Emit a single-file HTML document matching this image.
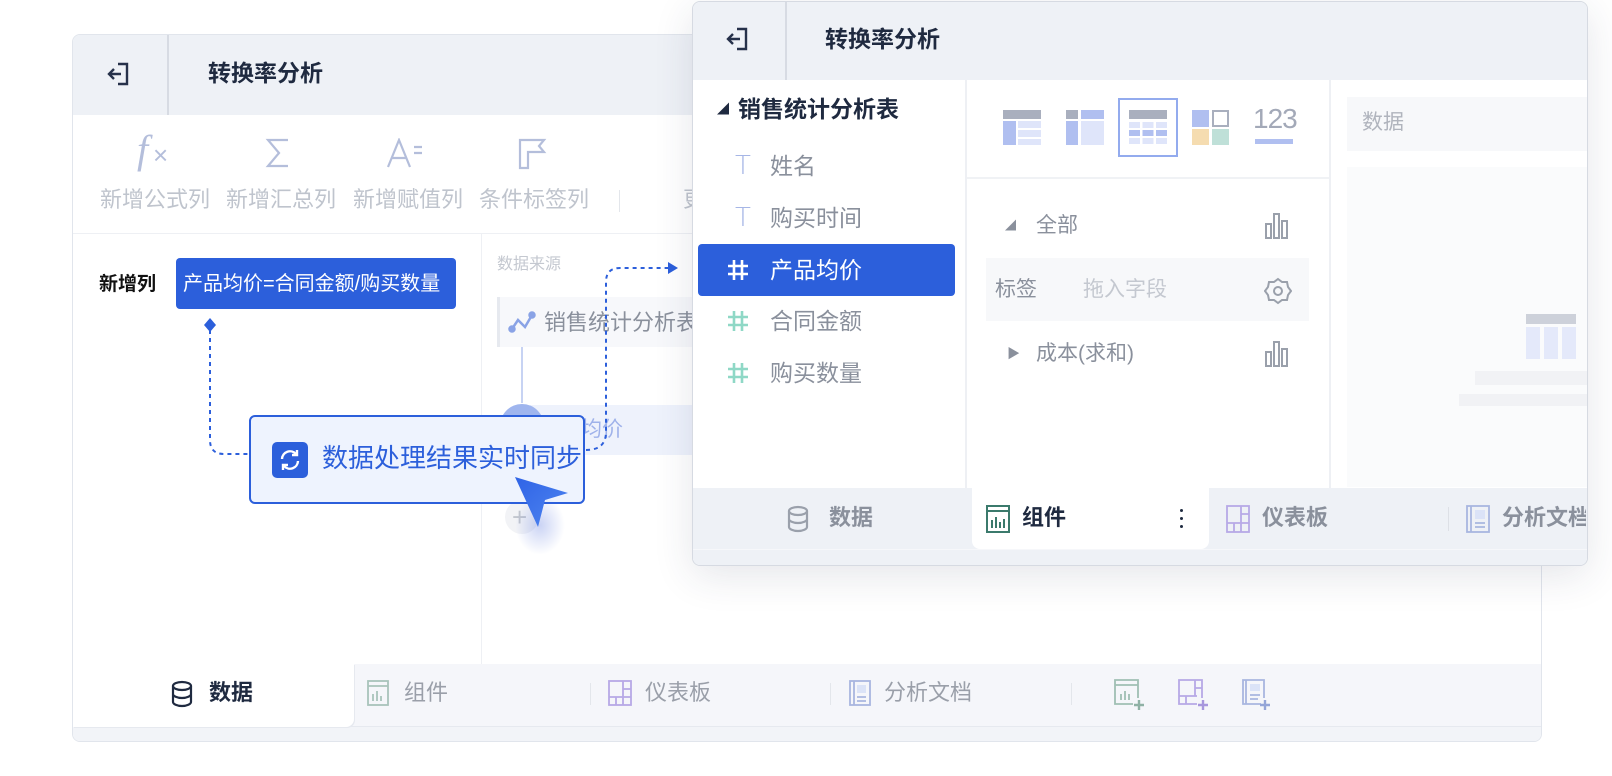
<!DOCTYPE html>
<html><head><meta charset="utf-8"><style>
*{margin:0;padding:0;box-sizing:border-box}
body{width:1612px;height:776px;background:#fff;position:relative;overflow:hidden;font-family:"Liberation Sans","Noto Sans CJK SC",sans-serif;color:#1f2a40}
.a{position:absolute}
.t{position:absolute;white-space:nowrap}
</style></head><body>

<!-- BACK PANEL -->
<div class="a" style="left:72px;top:34px;width:1470px;height:708px;border:1px solid #e1e5ec;border-radius:8px;background:#fff;overflow:hidden">
  <div class="a" style="left:0;top:0;width:1470px;height:80px;background:#eef1f6"></div>
  <div class="a" style="left:94px;top:0;width:2px;height:80px;background:#d7dbe3"></div>
  <div class="a" style="left:0;top:198px;width:1470px;height:1px;background:#eef0f4"></div>
  <div class="a" style="left:408px;top:198px;width:1px;height:431px;background:#eef0f4"></div>
  <div class="a" style="left:0;top:629px;width:1470px;height:79px;background:#f5f6fa"></div>
  <div class="a" style="left:0;top:691px;width:1470px;height:17px;background:#f2f4f8;border-top:1px solid #e6e9ef"></div>
  <div class="a" style="left:0;top:629px;width:281px;height:63px;background:#fff;border-radius:0 0 8px 0;box-shadow:1px 1px 0 #e6e9ef"></div>
</div>
<svg class="a" style="left:106px;top:60px" width="28" height="28" viewBox="0 0 28 28" fill="none" stroke="#26314a" stroke-width="2.4"><path d="M12 4h9v20h-9"/><path d="M3 14h12M8 9l-5 5 5 5"/></svg>
<div class="t" style="left:208px;top:58px;font-size:23px;font-weight:bold;line-height:30px;color:#1f2a40">转换率分析</div>

<!-- toolbar -->
<div class="t" style="left:137px;top:128px;font-family:'Liberation Serif',serif;font-style:italic;font-size:40px;line-height:44px;color:#b4bedb">f</div>
<div class="t" style="left:153px;top:140px;font-size:26px;line-height:30px;color:#b4bedb">×</div>
<svg class="a" style="left:262px;top:138px" width="34" height="30" viewBox="0 0 34 30" fill="none" stroke="#b4bedb" stroke-width="2.2"><path d="M26 2H6l11 13L6 28h20"/></svg>
<svg class="a" style="left:386px;top:138px" width="40" height="30" viewBox="0 0 40 30" fill="none" stroke="#b4bedb" stroke-width="2.2"><path d="M2 29L13 2l11 27M6 20h14"/><path d="M28 9h8M28 15h8"/></svg>
<svg class="a" style="left:517px;top:138px" width="32" height="32" viewBox="0 0 32 32" fill="none" stroke="#b4bedb" stroke-width="2.2"><path d="M3 30V2h24l-5 6 5 6H11v16H3z"/></svg>
<div class="t" style="left:100px;top:185px;font-size:22px;line-height:30px;color:#bfc4cd">新增公式列</div>
<div class="t" style="left:226px;top:185px;font-size:22px;line-height:30px;color:#bfc4cd">新增汇总列</div>
<div class="t" style="left:353px;top:185px;font-size:22px;line-height:30px;color:#bfc4cd">新增赋值列</div>
<div class="t" style="left:479px;top:185px;font-size:22px;line-height:30px;color:#bfc4cd">条件标签列</div>
<div class="a" style="left:619px;top:190px;width:1px;height:22px;background:#e3e6eb"></div>
<div class="t" style="left:683px;top:185px;font-size:22px;line-height:30px;color:#bfc4cd">更</div>

<!-- left pane -->
<div class="t" style="left:99px;top:272px;font-size:19px;font-weight:bold;line-height:26px;color:#111">新增列</div>
<div class="a" style="left:176px;top:258px;width:280px;height:51px;background:#2c5fdb;border-radius:4px"></div>
<div class="t" style="left:183px;top:270px;font-size:20px;line-height:28px;color:#fff">产品均价=合同金额/购买数量</div>

<!-- data source -->
<div class="t" style="left:497px;top:254px;font-size:16px;line-height:22px;color:#c4c8d0">数据来源</div>
<div class="a" style="left:497px;top:297px;width:200px;height:50px;background:#f7f8fb;border-left:3px solid #e6e9ef"></div>
<svg class="a" style="left:508px;top:310px" width="28" height="24" viewBox="0 0 28 24" fill="none" stroke="#8aa3e6" stroke-width="2.5"><path d="M4 19l6-9 7 7 7-12"/><circle cx="4" cy="19" r="2.5" fill="#8aa3e6"/><circle cx="24" cy="5" r="2.5" fill="#8aa3e6"/></svg>
<div class="t" style="left:544px;top:308px;font-size:22px;line-height:30px;color:#8a909c">销售统计分析表</div>
<div class="a" style="left:521px;top:347px;width:2px;height:56px;background:#c7d3f3"></div>
<div class="a" style="left:530px;top:405px;width:170px;height:50px;background:#eef2fc"></div>
<div class="a" style="left:500px;top:404px;width:44px;height:44px;border-radius:50%;background:#9fb5ee"></div>
<div class="t" style="left:560px;top:416px;font-size:21px;line-height:28px;color:#9fb2ea">品均价</div>
<div class="a" style="left:505px;top:500px;width:34px;height:34px;border-radius:50%;background:#f2f3f6"></div>
<div class="t" style="left:512px;top:502px;font-size:26px;line-height:30px;color:#c2c6ce">+</div>

<!-- dotted connectors -->
<svg class="a" style="left:0;top:0" width="700" height="560" fill="none">
  <path d="M210 318l6 7-6 7-6-7z" fill="#2c5fdb"/>
  <path d="M210 330V440q0 14 14 14h26" stroke="#2c5fdb" stroke-width="2" stroke-dasharray="4 4"/>
  <path d="M586 450q20 0 20-18V282q0-14 14-14h48" stroke="#2c5fdb" stroke-width="2" stroke-dasharray="4 4"/>
  <path d="M668 262l10 6-10 6z" fill="#2c5fdb"/>
</svg>

<!-- tooltip -->
<div class="a" style="left:249px;top:415px;width:336px;height:89px;background:#eef3fe;border:2px solid #2c5fdb;border-radius:6px"></div>
<div class="a" style="left:272px;top:442px;width:36px;height:36px;background:#2c5fdb;border-radius:5px"></div>
<svg class="a" style="left:272px;top:442px" width="36" height="36" viewBox="0 0 36 36" fill="none" stroke="#fff" stroke-width="2.4"><path d="M10 17a8 8 0 0 1 14-5"/><path d="M25 8v5h-5"/><path d="M26 19a8 8 0 0 1-14 5"/><path d="M11 28v-5h5"/></svg>
<div class="t" style="left:322px;top:442px;font-size:26px;line-height:32px;color:#2c5fdb">数据处理结果实时同步</div>

<!-- cursor -->
<div class="a" style="left:515px;top:495px;width:50px;height:60px;border-radius:50%;background:radial-gradient(ellipse,rgba(80,110,220,.3),rgba(80,110,220,0) 70%)"></div>
<svg class="a" style="left:505px;top:470px" width="80" height="70"><defs><linearGradient id="g" x1="0" y1="0" x2="1" y2="1"><stop offset="0" stop-color="#2f63e6"/><stop offset="1" stop-color="#4f86f0"/></linearGradient></defs><path d="M10 7L63 23 40 30 33 57z" fill="url(#g)"/></svg>

<!-- back tab bar -->
<svg class="a" style="left:170px;top:680px" width="24" height="28" viewBox="0 0 24 28" fill="none" stroke="#1f2a40" stroke-width="2.2"><ellipse cx="12" cy="6" rx="9" ry="4"/><path d="M3 6v16c0 2 4 4 9 4s9-2 9-4V6M3 14c0 2 4 4 9 4s9-2 9-4"/></svg>
<div class="t" style="left:209px;top:678px;font-size:22px;font-weight:bold;line-height:30px;color:#1f2a40">数据</div>
<svg class="a" style="left:367px;top:680px" width="22" height="26" viewBox="0 0 22 26" fill="none" stroke="#a9c4bb" stroke-width="1.8"><rect x="1" y="1" width="20" height="24"/><path d="M1 6h20M6 21v-7M10 21v-10M14 21v-5"/></svg>
<div class="t" style="left:404px;top:678px;font-size:22px;line-height:30px;color:#9a9fa9">组件</div>
<div class="a" style="left:590px;top:683px;width:1px;height:22px;background:#e3e6eb"></div>
<svg class="a" style="left:608px;top:680px" width="24" height="26" viewBox="0 0 24 26" fill="none" stroke="#b7a9e6" stroke-width="1.8"><rect x="1" y="1" width="22" height="24"/><path d="M15 1v16M15 9h8M1 17h22M8 17v8M15 17v8"/></svg>
<div class="t" style="left:645px;top:678px;font-size:22px;line-height:30px;color:#9a9fa9">仪表板</div>
<div class="a" style="left:830px;top:683px;width:1px;height:22px;background:#e3e6eb"></div>
<svg class="a" style="left:849px;top:680px" width="22" height="26" viewBox="0 0 22 26" fill="none" stroke="#a8b6e0" stroke-width="1.8"><rect x="1" y="1" width="20" height="24"/><path d="M5 1v24"/><rect x="8" y="5" width="9" height="8" fill="#dbe3f7" stroke="none"/><path d="M8 17h9M8 21h9"/></svg>
<div class="t" style="left:884px;top:678px;font-size:22px;line-height:30px;color:#9a9fa9">分析文档</div>
<div class="a" style="left:1071px;top:683px;width:1px;height:22px;background:#e3e6eb"></div>
<svg class="a" style="left:1114px;top:679px" width="32" height="32" viewBox="0 0 32 32" fill="none" stroke="#9fbfb3" stroke-width="1.8"><path d="M24 19V1H1v24h18"/><path d="M1 6h23M7 21v-6M11 21v-9M15 21v-6"/><path d="M25 21v10M20 26h10" stroke="#8fb1a5" stroke-width="2.4"/></svg>
<svg class="a" style="left:1178px;top:679px" width="32" height="32" viewBox="0 0 32 32" fill="none" stroke="#b7a9e6" stroke-width="1.8"><path d="M24 19V1H1v24h18"/><path d="M17 1v16M17 9h7M1 17h18M8 17v8"/><path d="M25 21v10M20 26h10" stroke="#a797dd" stroke-width="2.4"/></svg>
<svg class="a" style="left:1242px;top:679px" width="32" height="32" viewBox="0 0 32 32" fill="none" stroke="#a8b6e0" stroke-width="1.8"><path d="M22 19V1H1v24h18M4 1v24"/><rect x="8" y="5" width="10" height="7" fill="#dbe3f7" stroke="none"/><path d="M8 16h10M8 20h8"/><path d="M23 21v10M18 26h10" stroke="#94a5d8" stroke-width="2.4"/></svg>

<!-- FRONT PANEL -->
<div class="a" style="left:692px;top:1px;width:896px;height:565px;border:1px solid #d6dae2;border-radius:8px;background:#fff;overflow:hidden;box-shadow:0 10px 40px rgba(40,50,80,.12)">
  <div class="a" style="left:0;top:0;width:896px;height:78px;background:#eef1f6"></div>
  <div class="a" style="left:92px;top:0;width:2px;height:78px;background:#d7dbe3"></div>
  <div class="a" style="left:272px;top:78px;width:2px;height:408px;background:#eef0f4"></div>
  <div class="a" style="left:636px;top:78px;width:2px;height:408px;background:#eef0f4"></div>
  <div class="a" style="left:274px;top:175px;width:362px;height:2px;background:#f0f2f5"></div>
  <div class="a" style="left:0;top:486px;width:896px;height:79px;background:#eef1f6"></div>
  <div class="a" style="left:0;top:547px;width:896px;height:1px;background:#f6f7fa"></div>
  <div class="a" style="left:279px;top:486px;width:237px;height:61px;background:#fff;border-radius:0 0 8px 8px"></div>
  <!-- right col -->
  <div class="a" style="left:654px;top:95px;width:242px;height:54px;background:#f7f8fa"></div>
  <div class="t" style="left:669px;top:107px;font-size:21px;line-height:28px;color:#b0b4bd">数据</div>
  <div class="a" style="left:654px;top:165px;width:242px;height:320px;background:#fafbfc"></div>
  <div class="a" style="left:833px;top:312px;width:50px;height:10px;background:#cdd1da"></div>
  <div class="a" style="left:833px;top:325px;width:50px;height:32px;background:repeating-linear-gradient(90deg,#e4e9fa 0 14px,transparent 14px 18px)"></div>
  <div class="a" style="left:782px;top:369px;width:114px;height:14px;background:#f1f2f5"></div>
  <div class="a" style="left:766px;top:392px;width:130px;height:12px;background:#f1f2f5"></div>
</div>
<svg class="a" style="left:725px;top:25px" width="28" height="28" viewBox="0 0 28 28" fill="none" stroke="#26314a" stroke-width="2.4"><path d="M12 4h9v20h-9"/><path d="M3 14h12M8 9l-5 5 5 5"/></svg>
<div class="t" style="left:825px;top:24px;font-size:23px;font-weight:bold;line-height:30px;color:#1f2a40">转换率分析</div>

<!-- front left col -->
<div class="t" style="left:717px;top:95px;font-size:12px;line-height:28px;color:#1f2a40">◢</div>
<div class="t" style="left:738px;top:94px;font-size:23px;font-weight:bold;line-height:30px;color:#1f2a40">销售统计分析表</div>
<div class="t" style="left:735px;top:150px;font-family:'DejaVu Sans',sans-serif;font-size:26px;font-weight:200;line-height:32px;color:#a6b6e6">T</div>
<div class="t" style="left:770px;top:151px;font-size:23px;line-height:30px;color:#8a909c">姓名</div>
<div class="t" style="left:735px;top:202px;font-family:'DejaVu Sans',sans-serif;font-size:26px;font-weight:200;line-height:32px;color:#a6b6e6">T</div>
<div class="t" style="left:770px;top:203px;font-size:23px;line-height:30px;color:#8a909c">购买时间</div>
<div class="a" style="left:698px;top:244px;width:257px;height:52px;background:#2c5fdb;border-radius:4px"></div>
<svg class="a" style="left:726px;top:258px" width="24" height="24" viewBox="0 0 24 24" stroke="#fff" stroke-width="2.6"><path d="M8 2v20M16 2v20M2 8h20M2 16h20"/></svg>
<div class="t" style="left:770px;top:255px;font-size:23px;line-height:30px;color:#fff">产品均价</div>
<svg class="a" style="left:726px;top:309px" width="24" height="24" viewBox="0 0 24 24" stroke="#8fd8c6" stroke-width="2.6"><path d="M8 2v20M16 2v20M2 8h20M2 16h20"/></svg>
<div class="t" style="left:770px;top:306px;font-size:23px;line-height:30px;color:#8a909c">合同金额</div>
<svg class="a" style="left:726px;top:361px" width="24" height="24" viewBox="0 0 24 24" stroke="#8fd8c6" stroke-width="2.6"><path d="M8 2v20M16 2v20M2 8h20M2 16h20"/></svg>
<div class="t" style="left:770px;top:358px;font-size:23px;line-height:30px;color:#8a909c">购买数量</div>

<!-- chart type icons -->
<div class="a" style="left:1003px;top:110px;width:38px;height:9px;background:#a9afbe"></div>
<div class="a" style="left:1003px;top:121px;width:13px;height:24px;background:#b0bff0"></div>
<div class="a" style="left:1018px;top:121px;width:23px;height:7px;background:#dfe5fa"></div>
<div class="a" style="left:1018px;top:130px;width:23px;height:7px;background:#dfe5fa"></div>
<div class="a" style="left:1018px;top:139px;width:23px;height:6px;background:#dfe5fa"></div>
<div class="a" style="left:1066px;top:110px;width:12px;height:9px;background:#a9afbe"></div>
<div class="a" style="left:1081px;top:110px;width:23px;height:9px;background:#b0bff0"></div>
<div class="a" style="left:1066px;top:121px;width:12px;height:24px;background:#b0bff0"></div>
<div class="a" style="left:1081px;top:121px;width:23px;height:24px;background:#dfe5fa"></div>
<div class="a" style="left:1118px;top:98px;width:60px;height:59px;border:2px solid #93abee"></div>
<div class="a" style="left:1129px;top:110px;width:38px;height:9px;background:#a9afbe"></div>
<div class="a" style="left:1129px;top:122px;width:38px;height:6px;background:repeating-linear-gradient(90deg,#dfe5fa 0 11px,transparent 11px 13.5px)"></div>
<div class="a" style="left:1129px;top:130px;width:38px;height:6px;background:repeating-linear-gradient(90deg,#b0bff0 0 11px,transparent 11px 13.5px)"></div>
<div class="a" style="left:1129px;top:138px;width:38px;height:6px;background:repeating-linear-gradient(90deg,#dfe5fa 0 11px,transparent 11px 13.5px)"></div>
<div class="a" style="left:1192px;top:110px;width:17px;height:17px;background:#b0bff0"></div>
<div class="a" style="left:1212px;top:110px;width:17px;height:17px;border:2.5px solid #a9afbe"></div>
<div class="a" style="left:1192px;top:129px;width:17px;height:16px;background:#f5dcb0"></div>
<div class="a" style="left:1212px;top:129px;width:17px;height:16px;background:#bfe0d8"></div>
<div class="t" style="left:1253px;top:104px;font-size:28px;line-height:30px;color:#a3a9b8;letter-spacing:-1px">123</div>
<div class="a" style="left:1255px;top:139px;width:38px;height:5px;background:#b0bff0"></div>

<!-- fields -->
<div class="t" style="left:1005px;top:212px;font-size:11px;line-height:28px;color:#8a909c">◢</div>
<div class="t" style="left:1036px;top:211px;font-size:21px;line-height:30px;color:#8a909c">全部</div>
<svg class="a" style="left:1264px;top:212px" width="26" height="28" viewBox="0 0 26 28" fill="none" stroke="#9aa0ab" stroke-width="2"><rect x="2" y="12" width="5" height="14"/><rect x="10" y="2" width="5" height="24"/><rect x="18" y="9" width="5" height="17"/></svg>
<div class="a" style="left:986px;top:258px;width:323px;height:63px;background:#f7f8fa"></div>
<div class="t" style="left:995px;top:275px;font-size:21px;line-height:30px;color:#8a909c">标签</div>
<div class="t" style="left:1083px;top:275px;font-size:21px;line-height:30px;color:#c4c8d0">拖入字段</div>
<svg class="a" style="left:1264px;top:277px" width="28" height="28" viewBox="0 0 28 28" fill="none" stroke="#9aa0ab" stroke-width="2"><path d="M14 2l4 3 5 0 1 5 3 4-3 4-1 5-5 0-4 3-4-3-5 0-1-5-3-4 3-4 1-5 5 0z"/><circle cx="14" cy="14" r="4"/></svg>
<div class="t" style="left:1007px;top:340px;font-size:13px;line-height:28px;color:#8a909c">▶</div>
<div class="t" style="left:1036px;top:339px;font-size:21px;line-height:30px;color:#8a909c">成本(求和)</div>
<svg class="a" style="left:1264px;top:340px" width="26" height="28" viewBox="0 0 26 28" fill="none" stroke="#9aa0ab" stroke-width="2"><rect x="2" y="12" width="5" height="14"/><rect x="10" y="2" width="5" height="24"/><rect x="18" y="9" width="5" height="17"/></svg>

<!-- front tab bar -->
<svg class="a" style="left:786px;top:505px" width="24" height="28" viewBox="0 0 24 28" fill="none" stroke="#9aa0ab" stroke-width="2.2"><ellipse cx="12" cy="6" rx="9" ry="4"/><path d="M3 6v16c0 2 4 4 9 4s9-2 9-4V6M3 14c0 2 4 4 9 4s9-2 9-4"/></svg>
<div class="t" style="left:829px;top:503px;font-size:22px;font-weight:bold;line-height:30px;color:#8a909c">数据</div>
<svg class="a" style="left:986px;top:505px" width="24" height="28" viewBox="0 0 24 28" fill="none" stroke="#3b7a6c" stroke-width="2"><rect x="1" y="1" width="22" height="26"/><path d="M1 6h22M6 23v-8M10 23v-11M14 23v-6M18 23v-9"/></svg>
<div class="t" style="left:1022px;top:503px;font-size:22px;font-weight:bold;line-height:30px;color:#1f2a40">组件</div>
<div class="a" style="left:1180px;top:509px;width:3px;height:3px;background:#1f2a40;border-radius:50%;box-shadow:0 8px 0 #1f2a40,0 16px 0 #1f2a40"></div>
<svg class="a" style="left:1226px;top:505px" width="24" height="28" viewBox="0 0 24 28" fill="none" stroke="#b7a9e6" stroke-width="1.8"><rect x="1" y="1" width="22" height="26"/><path d="M15 1v17M15 9h8M1 18h22M8 18v9M15 18v9"/></svg>
<div class="t" style="left:1262px;top:503px;font-size:22px;font-weight:bold;line-height:30px;color:#8a909c">仪表板</div>
<div class="a" style="left:1448px;top:507px;width:1px;height:24px;background:#dde0e6"></div>
<svg class="a" style="left:1466px;top:505px" width="24" height="28" viewBox="0 0 24 28" fill="none" stroke="#a8b6e0" stroke-width="1.8"><rect x="1" y="1" width="22" height="26"/><path d="M5 1v26"/><rect x="9" y="5" width="10" height="9" fill="#dbe3f7" stroke="none"/><path d="M9 18h10M9 22h10"/></svg>
<div class="a" style="left:1502px;top:503px;width:84px;height:32px;overflow:hidden"><div class="t" style="left:0;top:0;font-size:22px;font-weight:bold;line-height:30px;color:#8a909c">分析文档</div></div>

</body></html>
